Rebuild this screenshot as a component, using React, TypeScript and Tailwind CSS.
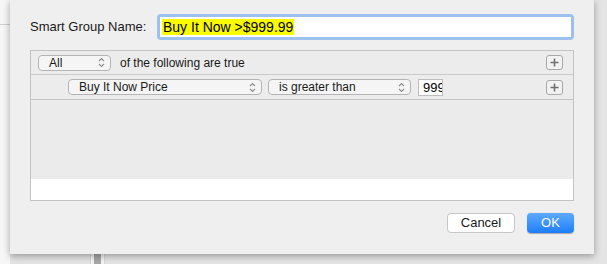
import { Fragment } from "react";

const Chevrons = () => (
    <svg width="7" height="11" viewBox="0 0 7 11" className="shrink-0">
        <path d="M1 4 L3.5 1.5 L6 4" fill="none" stroke="#8c8c8c" strokeWidth="1.1" />
        <path d="M1 7 L3.5 9.5 L6 7" fill="none" stroke="#8c8c8c" strokeWidth="1.1" />
    </svg>
);

interface PopupProps {
    label: string;
    className?: string;
}

const Popup = ({ label, className }: PopupProps) => {
    return (
        <div
            className={`flex items-center justify-between h-[16px] pl-[10px] pr-[5px] rounded-[4px]
                        border border-[#b4b4b4] bg-[#f5f5f5] text-[12px] text-[#1a1a1a] leading-none ${className}`}
        >
            <span>{label}</span>
            <Chevrons />
        </div>
    );
};

const PlusButton = () => (
    <div className="flex items-center justify-center w-[17px] h-[15px] rounded-[3px] border border-[#a8a8a8] bg-[#f2f2f2]">
        <svg width="9" height="9" viewBox="0 0 9 9">
            <path d="M4.5 0.5 V8.5 M0.5 4.5 H8.5" stroke="#707070" strokeWidth="1.6" />
        </svg>
    </div>
);

const App = () => {
    return (
        <div
            className="relative w-[607px] h-[264px] overflow-hidden bg-[#e4e4e4]"
            style={{ fontFamily: '"Liberation Sans", Arial, sans-serif' }}
        >
            {/* window behind the sheet */}
            <div className="absolute left-0 top-0 w-[10px] h-full bg-[#f6f6f6]">
                <div className="mt-[24px] h-px bg-[#cfcfcf]" />
            </div>
            <div className="absolute left-[90px] top-[250px] w-[15px] h-[20px] flex justify-center bg-[#f4f4f4] border-x border-[#d8d8d8]">
                <div className="w-[7px] h-full bg-[#a6a6a6]" />
            </div>

            {/* sheet */}
            <div className="absolute left-[10px] top-0 w-[584px] h-[254px] flex flex-col px-[20px] pt-[14px] bg-[#efefef] shadow-[0_2px_7px_rgba(0,0,0,0.35)]">
                <div className="flex items-center h-[26px]">
                    <span className="text-[13px] text-[#1a1a1a] w-[127px]">Smart Group Name:</span>
                    <div className="flex-1 h-[26px] rounded-[4px] bg-[#9cc1ef] p-[3px]">
                        <div className="h-full bg-white flex items-center pl-[2px]">
                            <span className="bg-[#fbfb00] text-[14px] text-black leading-[16px] px-px">
                                Buy It Now &gt;$999.99
                            </span>
                        </div>
                    </div>
                </div>

                <div className="mt-[10px] h-[151px] border border-[#c3c3c3] flex flex-col">
                    <div className="flex items-center h-[24px] pl-[7px] pr-[10px] bg-[#ececec] border-b border-[#cacaca]">
                        <Popup label="All" className="w-[73px]" />
                        <span className="ml-[9px] text-[12px] text-[#1a1a1a]">of the following are true</span>
                        <div className="ml-auto">
                            <PlusButton />
                        </div>
                    </div>
                    <div className="flex items-center h-[25px] pl-[37px] pr-[10px] bg-[#ececec] border-b border-[#c3c3c3]">
                        <Popup label="Buy It Now Price" className="w-[194px]" />
                        <Popup label="is greater than" className="w-[143px] ml-[6px] pl-[7px]" />
                        <div className="ml-[7px] w-[25px] h-[17px] border border-[#bdbdbd] bg-white overflow-hidden text-[13px] leading-[15px] pl-[4px] text-black whitespace-nowrap">
                            999
                        </div>
                        <div className="ml-auto">
                            <PlusButton />
                        </div>
                    </div>
                    <div className="flex-1 bg-[#ebebeb]" />
                    <div className="h-[21px] bg-white" />
                </div>

                <div className="mt-[12px] flex justify-end gap-[12px]">
                    {[
                        { label: "Cancel", primary: false },
                        { label: "OK", primary: true },
                    ].map((b) => (
                        <Fragment key={b.label}>
                            {b.primary ? (
                                <div className="flex items-center justify-center w-[47px] h-[20px] rounded-[4px] bg-gradient-to-b from-[#5eaafb] to-[#1a7df8] text-white text-[13px] shadow-[0_0.5px_1px_rgba(0,0,0,0.3)]">
                                    {b.label}
                                </div>
                            ) : (
                                <div className="flex items-center justify-center w-[68px] h-[20px] rounded-[4px] bg-white border border-[#c6c6c6] text-[#1a1a1a] text-[13px]">
                                    {b.label}
                                </div>
                            )}
                        </Fragment>
                    ))}
                </div>
            </div>
        </div>
    );
};

export default App;
